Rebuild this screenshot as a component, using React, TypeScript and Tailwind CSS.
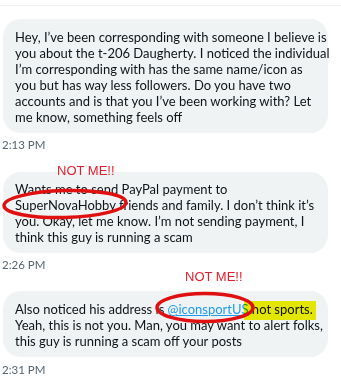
import React from 'react';

const Bubble = ({ children, className = '' }: { children: React.ReactNode; className?: string }) => (
  <div className={`relative ml-[3px] w-[325px] whitespace-nowrap rounded-[18px] bg-[#eff3f4] pl-3 pr-2 text-[13px] leading-4 text-[#0f1419] ${className}`}>
    {children}
  </div>
);

const Time = ({ t }: { t: string }) => (
  <div className="pl-[2px] text-[11.5px] leading-4 text-[#536471]">{t}</div>
);

export default function App() {
  return (
    <div
      className="relative h-[385px] w-[341px] overflow-hidden bg-white"
      style={{ fontFamily: 'Lato, "Open Sans", sans-serif' }}
    >
      <div className="h-[6px] border-b border-[#eff3f4]" />

      <Bubble className="mt-[13px] pt-[10px] pb-[8px]">
        Hey, I’ve been corresponding with someone I believe is<br />
        you about the t-206 Daugherty. I noticed the individual<br />
        I’m corresponding with has the same name/icon as<br />
        you but has way less followers. Do you have two<br />
        accounts and is that you I’ve been working with? Let<br />
        me know, something feels off
      </Bubble>
      <div className="mt-1">
        <Time t="2:13 PM" />
      </div>

      <Bubble className="mt-[19px] pt-[9px] pb-[8px]">
        <span
          className="absolute left-[54px] top-[-9px] text-[13px] leading-4 text-[#e0202e]"
          style={{ fontFamily: '"Liberation Sans", Arial, sans-serif' }}
        >
          NOT ME!!
        </span>
        Wants me to send PayPal payment to<br />
        SuperNovaHobby friends and family. I don’t think it’s<br />
        you. Okay, let me know. I’m not sending payment, I<br />
        think this guy is running a scam
        <svg className="pointer-events-none absolute left-[-2px] top-[15px]" width="128" height="34" viewBox="0 0 128 34">
          <ellipse cx="64" cy="17" rx="61" ry="13.5" fill="none" stroke="#e01010" strokeWidth="3.5" transform="rotate(-1.5 64 17)" />
        </svg>
      </Bubble>
      <div className="mt-1">
        <Time t="2:26 PM" />
      </div>

      <Bubble className="mt-[18px] pt-[10px] pb-[8px]">
        <span
          className="absolute left-[182px] top-[-22px] text-[13px] leading-4 text-[#e0202e]"
          style={{ fontFamily: '"Liberation Sans", Arial, sans-serif' }}
        >
          NOT ME!!
        </span>
        <span className="pointer-events-none absolute left-[241px] top-[10px] h-[19px] w-[72px] bg-[#f2f200] mix-blend-multiply" />
        Also noticed his address is <span className="text-[#1d9bf0] underline">@iconsportUS</span> not sports.<br />
        Yeah, this is not you. Man, you may want to alert folks,<br />
        this guy is running a scam off your posts
        <svg className="pointer-events-none absolute left-[149px] top-[0px]" width="106" height="34" viewBox="0 0 106 34">
          <ellipse cx="53" cy="16.5" rx="48" ry="14" fill="none" stroke="#e01010" strokeWidth="3.5" />
        </svg>
      </Bubble>
      <div className="mt-[5px]">
        <Time t="2:31 PM" />
      </div>
    </div>
  );
}
